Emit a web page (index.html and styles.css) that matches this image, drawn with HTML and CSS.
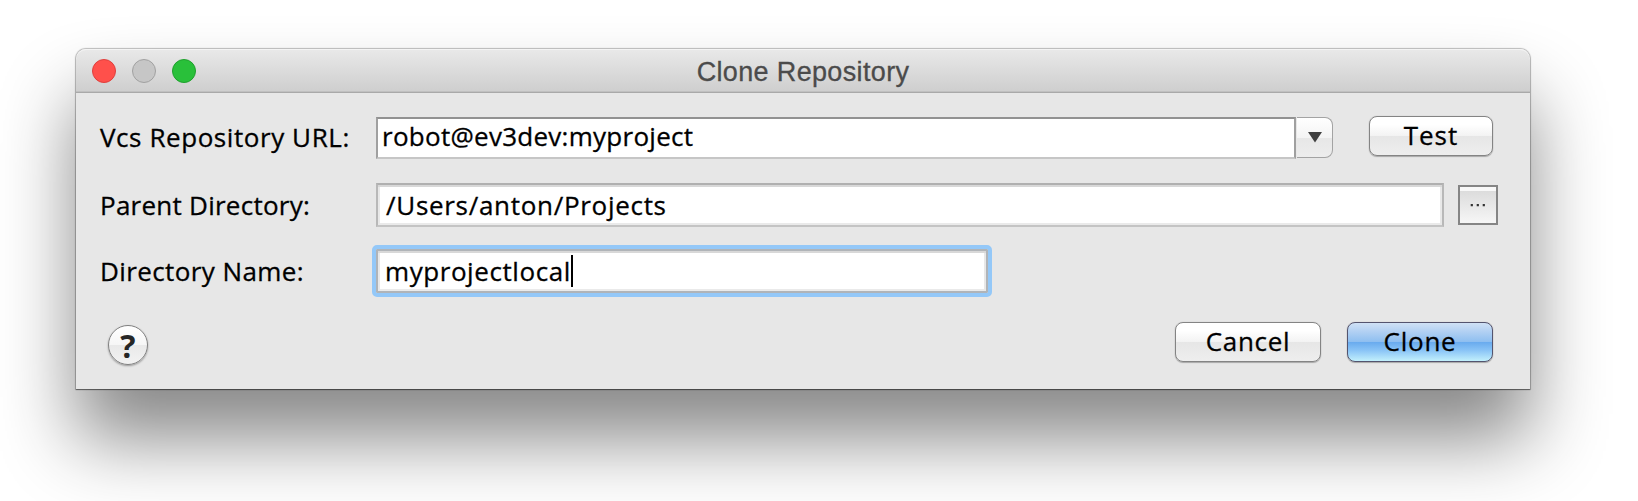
FILE: index.html
```
<!DOCTYPE html>
<html lang="en">
<head>
<meta charset="utf-8">
<title>Clone Repository</title>
<link rel="stylesheet" href="styles.css">
</head>
<body>
<main class="window">
  <header class="titlebar">
    <div class="lights"><span class="light red"></span><span class="light gray"></span><span class="light green"></span></div>
    <h1 class="title"><span class="t-title">Clone Repository</span></h1>
  </header>
  <div class="content">
    <div class="row row-url">
      <label class="label"><span class="t-url">Vcs Repository URL:</span></label>
      <div class="combo">
        <div class="combo-field"><span class="t-robot">robot@ev3dev:myproject</span></div>
        <div class="combo-arrow"><svg width="14" height="11" viewBox="0 0 14 11"><path d="M0 0H14L7 10.5Z" fill="#404040"/></svg></div>
      </div>
      <div class="button test"><span class="t-test">Test</span></div>
    </div>
    <div class="row row-parent">
      <label class="label"><span class="t-parent">Parent Directory:</span></label>
      <div class="field"><span class="t-path">/Users/anton/Projects</span></div>
      <div class="browse"><svg width="16" height="4" viewBox="0 0 16 4"><path d="M.7 1h2.2v2.2H.7zM6.7 1h2.2v2.2H6.7zM12.7 1h2.2v2.2h-2.2z" fill="#333"/></svg></div>
    </div>
    <div class="row row-name">
      <label class="label"><span class="t-name">Directory Name:</span></label>
      <div class="field focused"><span class="t-local">myprojectlocal</span><span class="caret"></span></div>
    </div>
    <footer class="actions">
      <div class="help"><span class="t-help">?</span></div>
      <div class="button cancel"><span class="t-cancel">Cancel</span></div>
      <div class="button primary"><span class="t-clone">Clone</span></div>
    </footer>
  </div>
</main>
</body>
</html>
```

FILE: styles.css
```
* { box-sizing: border-box; }
body {
  margin: 0;
  height: 501px;
  padding: 49px 108px 0 76px;
  overflow: hidden;
  background: #fff;
  font: 26px/36px "Open Sans", "Noto Sans", sans-serif;
  color: #000;
  -webkit-text-stroke: .3px currentColor;
}
span { white-space: nowrap; }
.window {
  width: 1454px;
  height: 340px;
  border-radius: 10px 10px 0 0;
  background: #e7e7e7;
  box-shadow: 0 0 1px 1px rgba(0,0,0,.25), 0 1px 1px rgba(0,0,0,.4), 0 50px 76px rgba(0,0,0,.47);
}
.titlebar {
  display: grid;
  grid-template-columns: 160px 1fr 160px;
  align-items: center;
  height: 44px;
  border-radius: 10px 10px 0 0;
  border-bottom: 1px solid #a9a9a9;
  background: linear-gradient(#e9e9e9, #cecece);
  box-shadow: inset 0 1px 0 #f4f4f4, inset 0 -1px 0 #c0c0c0;
}
.lights { display: flex; gap: 16px; padding: 1px 0 0 16px; }
.light { width: 24px; height: 24px; border-radius: 50%; border: 1px solid; }
.red { background: #ff504b; border-color: #df3f3d; }
.gray { background: #c6c6c6; border-color: #a1a1a1; }
.green { background: #29c03a; border-color: #1fa02d; }
.title {
  margin: 0;
  padding-top: 2px;
  text-align: center;
  font: 27px/36px "Liberation Sans", Arial, sans-serif;
  letter-spacing: .35px;
  color: #4b4b4b;
}
.content { padding: 23px 32px 0 24px; }
.row { display: flex; }
.label { width: 276px; flex: none; }
.row-url { height: 67px; }
.row-url .label { padding-top: 3px; }
.combo { display: flex; width: 957px; margin: 1px 36px 0 0; height: 42px; }
.combo-field {
  flex: none;
  width: 920px;
  border: 2px solid #a0a0a0;
  border-top-color: #929292;
  border-bottom-color: #c6c6c6;
  background: #fff;
  padding-left: 4px;
  line-height: 34px;
}
.combo-arrow {
  display: flex;
  align-items: center;
  justify-content: center;
  width: 36px;
  height: 41px;
  margin-left: 1px;
  border: 1px solid #a3a3a3;
  border-left: 0;
  border-radius: 0 8px 8px 0;
  background: linear-gradient(#fff, #f4f4f4 50%, #e7e7e7 51%, #ededed);
}
.button {
  height: 40px;
  border: 1px solid #848484;
  border-radius: 8px;
  text-align: center;
  background: linear-gradient(#fff, #fff 20%, #f3f3f3 49%, #e6e6e6 50%, #eee);
  box-shadow: 0 1px 1px rgba(0,0,0,.25), 0 0 1px rgba(0,0,0,.25);
}
.test { width: 124px; }
.row-parent { height: 62px; }
.row-parent .label { padding-top: 4px; }
.field {
  width: 1068px;
  height: 44px;
  border: 2px solid #b8b8b8;
  border-top-color: #b0b0b0;
  border-bottom-color: #c4c4c4;
  background: #fff;
  padding: 2px 0 0 8px;
  box-shadow: inset 0 2px 0 #d8d8d8, inset 2px 0 0 #e8e8e8, inset -2px 0 0 #e8e8e8, inset 0 -2px 0 #eaeaea;
}
.browse {
  display: flex;
  align-items: center;
  justify-content: center;
  width: 40px;
  height: 40px;
  margin: 2px 0 0 14px;
  border: 2px solid #858585;
  background: linear-gradient(#f8f8f8 0 4px, #dcdcdc 4px, #f6f6f6);
}
.row-name { height: 77px; }
.row-name .label { padding-top: 8px; }
.row-name .focused {
  display: flex;
  width: 612px;
  margin-top: 4px;
  border-color: #b0b4b8;
  outline: 4px solid #94c8f8;
  border-radius: 1px;
  padding: 2px 0 0 7px;
}
.caret { width: 2px; height: 32px; margin-top: 2px; background: #000; }
.actions { display: flex; padding: 0 5px 0 8px; }
.help {
  width: 40px;
  height: 40px;
  margin: 3px auto 0 0;
  border: 1px solid #808080;
  border-radius: 50%;
  background: linear-gradient(#fff, #f6f6f6 49%, #e9e9e9 50%, #f2f2f2);
  box-shadow: 0 1px 2px rgba(0,0,0,.35);
  text-align: center;
  font-weight: 700;
  font-size: 32px;
  line-height: 40px;
  color: #262626;
  -webkit-text-stroke: 0;
}
.cancel { width: 146px; margin-right: 26px; }
.primary {
  width: 146px;
  border-color: #54546e;
  background: linear-gradient(#d0e1f5, #b5d2f3 20%, #8fbff0 49%, #68aaee 50%, #8ac4f6 72%, #c2f0fc);
}
.t-url { letter-spacing: .57px; }
.t-robot { letter-spacing: .27px; }
.t-parent { letter-spacing: .25px; }
.t-path { letter-spacing: .7px; }
.t-name { letter-spacing: .4px; }
.t-local { letter-spacing: .57px; }
.t-test { letter-spacing: 1px; }
.t-cancel { letter-spacing: .65px; }
.t-clone { letter-spacing: .75px; }
```
